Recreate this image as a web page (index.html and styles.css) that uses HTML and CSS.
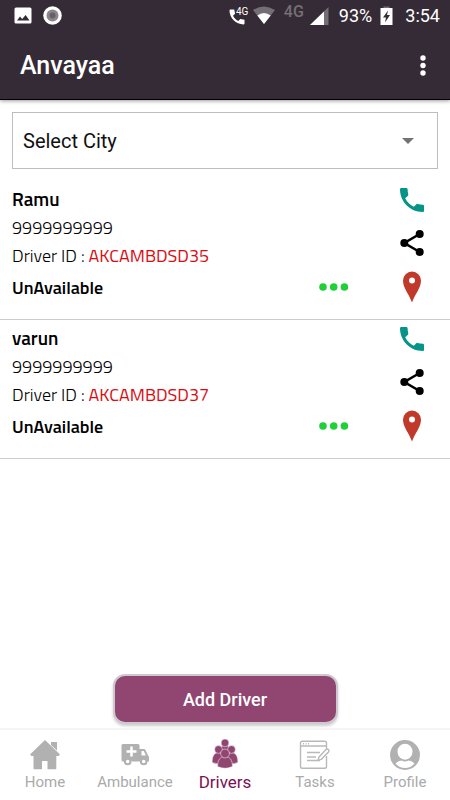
FILE: index.html
```html
<!DOCTYPE html>
<html lang="en">
<head>
    <meta charset="UTF-8">
    <meta name="viewport" content="width=device-width, initial-scale=1.0">
    <title>Anvayaa - Drivers</title>
    <link rel="stylesheet" href="styles.css">
</head>
<body>
    <header>
        <div class="status-bar">
            <svg width="18" height="18" viewBox="0 0 18 18"><rect x="0.500" y="0.500" width="17" height="16" rx="1.500" fill="#fff"/><path d="M3 13.500l3-4 2.200 2.500 3.400-4 3.900 5.500z" fill="#352b36"/></svg>
            <svg class="st-record" width="20" height="20" viewBox="0 0 20 20"><circle cx="9.500" cy="9.500" r="9.300" fill="#fff"/><circle cx="9.500" cy="9.500" r="6" fill="#8b858c"/><circle cx="9.500" cy="9.500" r="3" fill="#686069"/></svg>
            <span class="spacer"></span>
            <svg width="22" height="20" viewBox="0 0 22 20"><path d="M1.500 3.500h3.700l.9 4.200-2.100 2c1.400 2.600 2.700 3.900 5.300 5.300l2-2.100 4.200.9v3.700c0 .6-.4.900-1 .9C7 18.400.5 12 .5 4.500c0-.600.400-1 1-1z" fill="#fff"/><text x="7" y="9" class="call-4g">4G</text></svg>
            <svg class="st-wifi" width="22" height="20" viewBox="0 0 22 20"><path d="M0 4Q11-3 22 4L11 18z" fill="#756e77"/><path d="M4.300 9.500Q11 4.500 17.700 9.500L11 18z" fill="#fff"/></svg>
            <span class="network">4G</span>
            <svg width="19" height="19" viewBox="0 0 19 19"><path d="M18.500 0v18H0z" fill="#756e77"/><path d="M14 4.400V18H0z" fill="#fff"/></svg>
            <span class="battery-text">93%</span>
            <svg class="st-battery" width="13" height="20" viewBox="0 0 13 20"><path d="M3.500 0.500h6V3h-6z" fill="#756e77"/><path d="M.5 2h12v17H.5z" fill="#fff"/><path d="M8 4.500L3 11.500h3l-1 5L10 9H7z" fill="#352b36"/></svg>
            <span class="clock">3:54</span>
        </div>
        <div class="app-bar">
            <h1>Anvayaa</h1>
            <button class="menu-button" aria-label="More options">
                <svg width="6" height="22" viewBox="0 0 6 22"><g fill="#fff"><circle cx="3" cy="3" r="2.700"/><circle cx="3" cy="10.500" r="2.700"/><circle cx="3" cy="18" r="2.700"/></g></svg>
            </button>
        </div>
    </header>

    <main>
        <div class="city-box">
            <select class="city-select" aria-label="Select City">
                <option>Select City</option>
            </select>
            <svg class="city-arrow" width="12" height="6" viewBox="0 0 12 6"><path d="M0 0h12L6 6z" fill="#737373"/></svg>
        </div>

        <ul class="driver-list">
            <li class="driver">
                <div class="driver-info">
                    <h2>Ramu</h2>
                    <p class="phone">9999999999</p>
                    <p class="driver-id">Driver ID : <span>AKCAMBDSD35</span></p>
                    <p class="state">UnAvailable</p>
                </div>
                <button class="dots-button" aria-label="Driver options">
                    <svg width="30" height="8" viewBox="0 0 30 8"><g fill="#1fd137"><circle cx="4" cy="4" r="3.800"/><circle cx="14.700" cy="4" r="3.800"/><circle cx="25.400" cy="4" r="3.800"/></g></svg>
                </button>
                <div class="driver-actions">
                    <button aria-label="Call"><svg width="24" height="24" viewBox="3 3 18 18"><path fill="#059488" d="M6.900 10.600c1.400 2.800 3.700 5.100 6.500 6.500l1.900-1.900c.3-.3.700-.4 1-.2 1.200.3 2.400.5 3.700.5.600 0 1 .4 1 1V20c0 .55-.45 1-1 1-9.390 0-17-7.610-17-17 0-.55.45-1 1-1h3.700c.55 0 1 .45 1 1 0 1.250.2 2.500.5 3.700.1.35 0 .74-.25 1.020z"/></svg></button>
                    <button aria-label="Share"><svg width="24" height="26" viewBox="0 0 24 26"><path d="M19.700 4L4.300 13l15.400 9" fill="none" stroke="#000" stroke-width="2.600"/><circle cx="19.700" cy="4" r="4"/><circle cx="4.300" cy="13" r="4"/><circle cx="19.700" cy="22" r="4"/></svg></button>
                    <button aria-label="Location"><svg width="18" height="32" viewBox="0 0 18 32"><path fill="#c0392b" fill-rule="evenodd" d="M9 .500a9 9 0 0 0-9 9C0 17 6 23 9 31.500 12 23 18 17 18 9.500a9 9 0 0 0-9-9zM9 6.500a3 3 0 1 1 0 6 3 3 0 0 1 0-6z"/></svg></button>
                </div>
            </li>
            <li class="driver">
                <div class="driver-info">
                    <h2>varun</h2>
                    <p class="phone">9999999999</p>
                    <p class="driver-id">Driver ID : <span>AKCAMBDSD37</span></p>
                    <p class="state">UnAvailable</p>
                </div>
                <button class="dots-button" aria-label="Driver options">
                    <svg width="30" height="8" viewBox="0 0 30 8"><g fill="#1fd137"><circle cx="4" cy="4" r="3.800"/><circle cx="14.700" cy="4" r="3.800"/><circle cx="25.400" cy="4" r="3.800"/></g></svg>
                </button>
                <div class="driver-actions">
                    <button aria-label="Call"><svg width="24" height="24" viewBox="3 3 18 18"><path fill="#059488" d="M6.900 10.600c1.400 2.800 3.700 5.100 6.500 6.500l1.900-1.900c.3-.3.700-.4 1-.2 1.200.3 2.400.5 3.700.5.600 0 1 .4 1 1V20c0 .55-.45 1-1 1-9.390 0-17-7.610-17-17 0-.55.45-1 1-1h3.700c.55 0 1 .45 1 1 0 1.250.2 2.500.5 3.700.1.35 0 .74-.25 1.020z"/></svg></button>
                    <button aria-label="Share"><svg width="24" height="26" viewBox="0 0 24 26"><path d="M19.700 4L4.300 13l15.400 9" fill="none" stroke="#000" stroke-width="2.600"/><circle cx="19.700" cy="4" r="4"/><circle cx="4.300" cy="13" r="4"/><circle cx="19.700" cy="22" r="4"/></svg></button>
                    <button aria-label="Location"><svg width="18" height="32" viewBox="0 0 18 32"><path fill="#c0392b" fill-rule="evenodd" d="M9 .500a9 9 0 0 0-9 9C0 17 6 23 9 31.500 12 23 18 17 18 9.500a9 9 0 0 0-9-9zM9 6.500a3 3 0 1 1 0 6 3 3 0 0 1 0-6z"/></svg></button>
                </div>
            </li>
        </ul>
    </main>

    <button class="add-button">Add Driver</button>

    <nav>
        <a href="#home">
            <svg width="32" height="32" viewBox="0 0 32 32"><path fill="#b1b1b1" d="M16 1L1 15.500 2.500 17h2v12.500q0 .8.800.8h7.700V22h5.500v8.300h8q.8 0 .8-.8V17h2.200l1.500-1.500z"/><path fill="#b1b1b1" d="M22 3h6v8.500L22 6z"/></svg>
            <span>Home</span>
        </a>
        <a href="#ambulance">
            <svg width="32" height="32" viewBox="0 0 32 32"><path fill="#b1b1b1" d="M4 5h15q1.500 0 1.500 1.500V10H25q1 0 1.500 1l2.500 5.500q1 .5 1 1.500v4.500h-1.500a4 4 0 0 0-7.500 0h-8a4 4 0 0 0-7.500 0H4q-1.500 0-1.500-1.500V6.500Q2.500 5 4 5z"/><path d="M12.500 7.500v10M7.500 12.500h10" stroke="#fff" stroke-width="2.500"/><path d="M22.500 12h2.300l2 4.500h-4.300z" fill="#fff"/><g fill="#fff" stroke="#b1b1b1" stroke-width="2"><circle cx="8.700" cy="22.500" r="2.800"/><circle cx="24.700" cy="22.500" r="2.800"/></g></svg>
            <span>Ambulance</span>
        </a>
        <a href="#drivers" class="active">
            <svg width="32" height="32" viewBox="0 0 32 32"><g fill="#914571" stroke="#fff" stroke-width=".5"><path d="M10 15q0-8.500 6-8.500t6 8.500z"/><circle cx="16" cy="3.900" r="3.900"/><path d="M3 23.500q0-10 6.500-10t6.500 10q-6.500 3-13 0zM16 23.500q0-10 6.500-10t6.500 10q-6.500 3-13 0z"/><circle cx="9.500" cy="10.500" r="3.900"/><circle cx="22.500" cy="10.500" r="3.900"/><path d="M8.500 27.500q0-10 7.500-10t7.500 10q-7.500 3.500-15 0z"/><circle cx="16" cy="14.500" r="4.400"/></g></svg>
            <span>Drivers</span>
        </a>
        <a href="#tasks">
            <svg width="32" height="32" viewBox="0 0 32 32"><g fill="none" stroke="#b9b9b9" stroke-width="1.400"><path d="M27.500 10V4q0-1.800-1.800-1.800H3.300Q1.500 2.200 1.500 4v23.500q0 1.800 1.800 1.800h22.400q1.800 0 1.800-1.800V17M1.500 7h26"/><path d="M8 13.500h13M8 18h9M8 21.500h13"/><path d="M20 18l7-7.500q1.200-1 2.500 0 1 1.200 0 2.500l-7.200 7.300-3.300 1z" fill="#fff"/><path d="M4 4.700h1M6.500 4.700h1M9 4.700h1"/></g></svg>
            <span>Tasks</span>
        </a>
        <a href="#profile">
            <svg width="32" height="32" viewBox="0 0 32 32"><circle cx="16" cy="16" r="15" fill="#b1b1b1"/><ellipse cx="16" cy="12.700" rx="7.500" ry="8" fill="#fff"/><path d="M6.500 24.500q3-3 6-3 3.500 2 7 0 3 0 6 3Q21.500 29 16 29t-9.500-4.500z" fill="#fff"/></svg>
            <span>Profile</span>
        </a>
    </nav>
</body>
</html>
```

FILE: styles.css
```css
* {
    margin: 0;
    padding: 0;
    box-sizing: border-box;
}

body {
    display: flex;
    flex-direction: column;
    min-height: 100vh;
    background-color: #fff;
    color: #000;
    font-family: Roboto, sans-serif;
}

button {
    background: none;
    border: none;
    cursor: pointer;
    font-family: inherit;
}

svg {
    display: block;
    flex-shrink: 0;
}

header {
    background-color: #352b36;
    color: #fff;
    border-bottom: 1px solid #000;
    box-shadow: 0 1px 4px rgba(0,0,0,0.4);
}

.status-bar {
    display: flex;
    align-items: center;
    height: 32px;
    padding: 0 10px 0 14px;
}

.st-record {
    margin-left: 11px;
}

.spacer {
    flex: 1;
}

.call-4g {
    font-size: 10px;
    fill: #fff;
}

.st-wifi {
    margin-left: 2px;
}

.network {
    margin: 0 6px 8px 9px;
    color: #756e77;
    font-size: 16px;
    font-weight: 500;
    line-height: 16px;
}

.battery-text {
    margin-left: 10px;
    font-size: 18px;
    line-height: 32px;
}

.st-battery {
    margin: 0 12px 0 8px;
}

.clock {
    font-size: 18px;
    line-height: 32px;
}

.app-bar {
    display: flex;
    align-items: center;
    justify-content: space-between;
    height: 67px;
    padding: 0 20px;
}

.app-bar h1 {
    font-size: 25px;
    font-weight: 500;
}

.menu-button {
    padding: 4px;
}

main {
    flex: 1;
}

.city-box {
    position: relative;
    margin: 12px 12px;
}

.city-select {
    display: block;
    width: 100%;
    height: 57px;
    padding: 0 10px;
    appearance: none;
    background-color: #fff;
    border: 1px solid #bdbdbd;
    border-radius: 0;
    color: #111;
    font-family: inherit;
    font-size: 20px;
}

.city-arrow {
    position: absolute;
    top: 26px;
    right: 24px;
    pointer-events: none;
}

.driver-list {
    list-style: none;
}

.driver {
    display: flex;
    height: 139px;
    padding: 4px 26px 0 12px;
    border-bottom: 1px solid #ccc;
    font-family: "Titillium Web", "Open Sans", sans-serif;
}

.driver-info {
    flex: 1;
}

.driver h2 {
    margin-bottom: 1px;
    font-size: 19px;
    font-weight: 600;
    line-height: 28px;
}

.state {
    font-size: 18px;
    font-weight: 600;
    line-height: 28px;
}

.phone,
.driver-id {
    font-size: 18px;
    font-weight: 300;
    line-height: 28px;
}

.driver-info .state {
    margin-top: 4px;
}

.driver-id span {
    color: #dc0b12;
    font-weight: 400;
}

.dots-button {
    align-self: flex-end;
    margin: 0 51px 28px 0;
}

.driver-actions {
    display: flex;
    flex-direction: column;
    align-items: center;
    padding-top: 3px;
}

.driver-actions button + button {
    margin-top: 18px;
}

.driver-actions button:last-child {
    margin-top: 15px;
}

.add-button {
    align-self: center;
    width: 50%;
    height: 50px;
    margin-bottom: 4px;
    background-color: #914571;
    border: 2px solid #cfc8d0;
    border-radius: 12px;
    box-shadow: 0 2px 3px rgba(0,0,0,0.2);
    color: #fff;
    font-size: 18px;
    font-weight: 500;
}

nav {
    display: grid;
    grid-template-columns: repeat(5, 1fr);
    height: 72px;
    border-top: 2px solid #f4f4f4;
}

nav a {
    display: flex;
    flex-direction: column;
    align-items: center;
    padding-top: 9px;
    color: #aaa;
    font-size: 15px;
    line-height: 22px;
    text-decoration: none;
}

nav a.active {
    color: #7b0f52;
    font-size: 17px;
}
```
